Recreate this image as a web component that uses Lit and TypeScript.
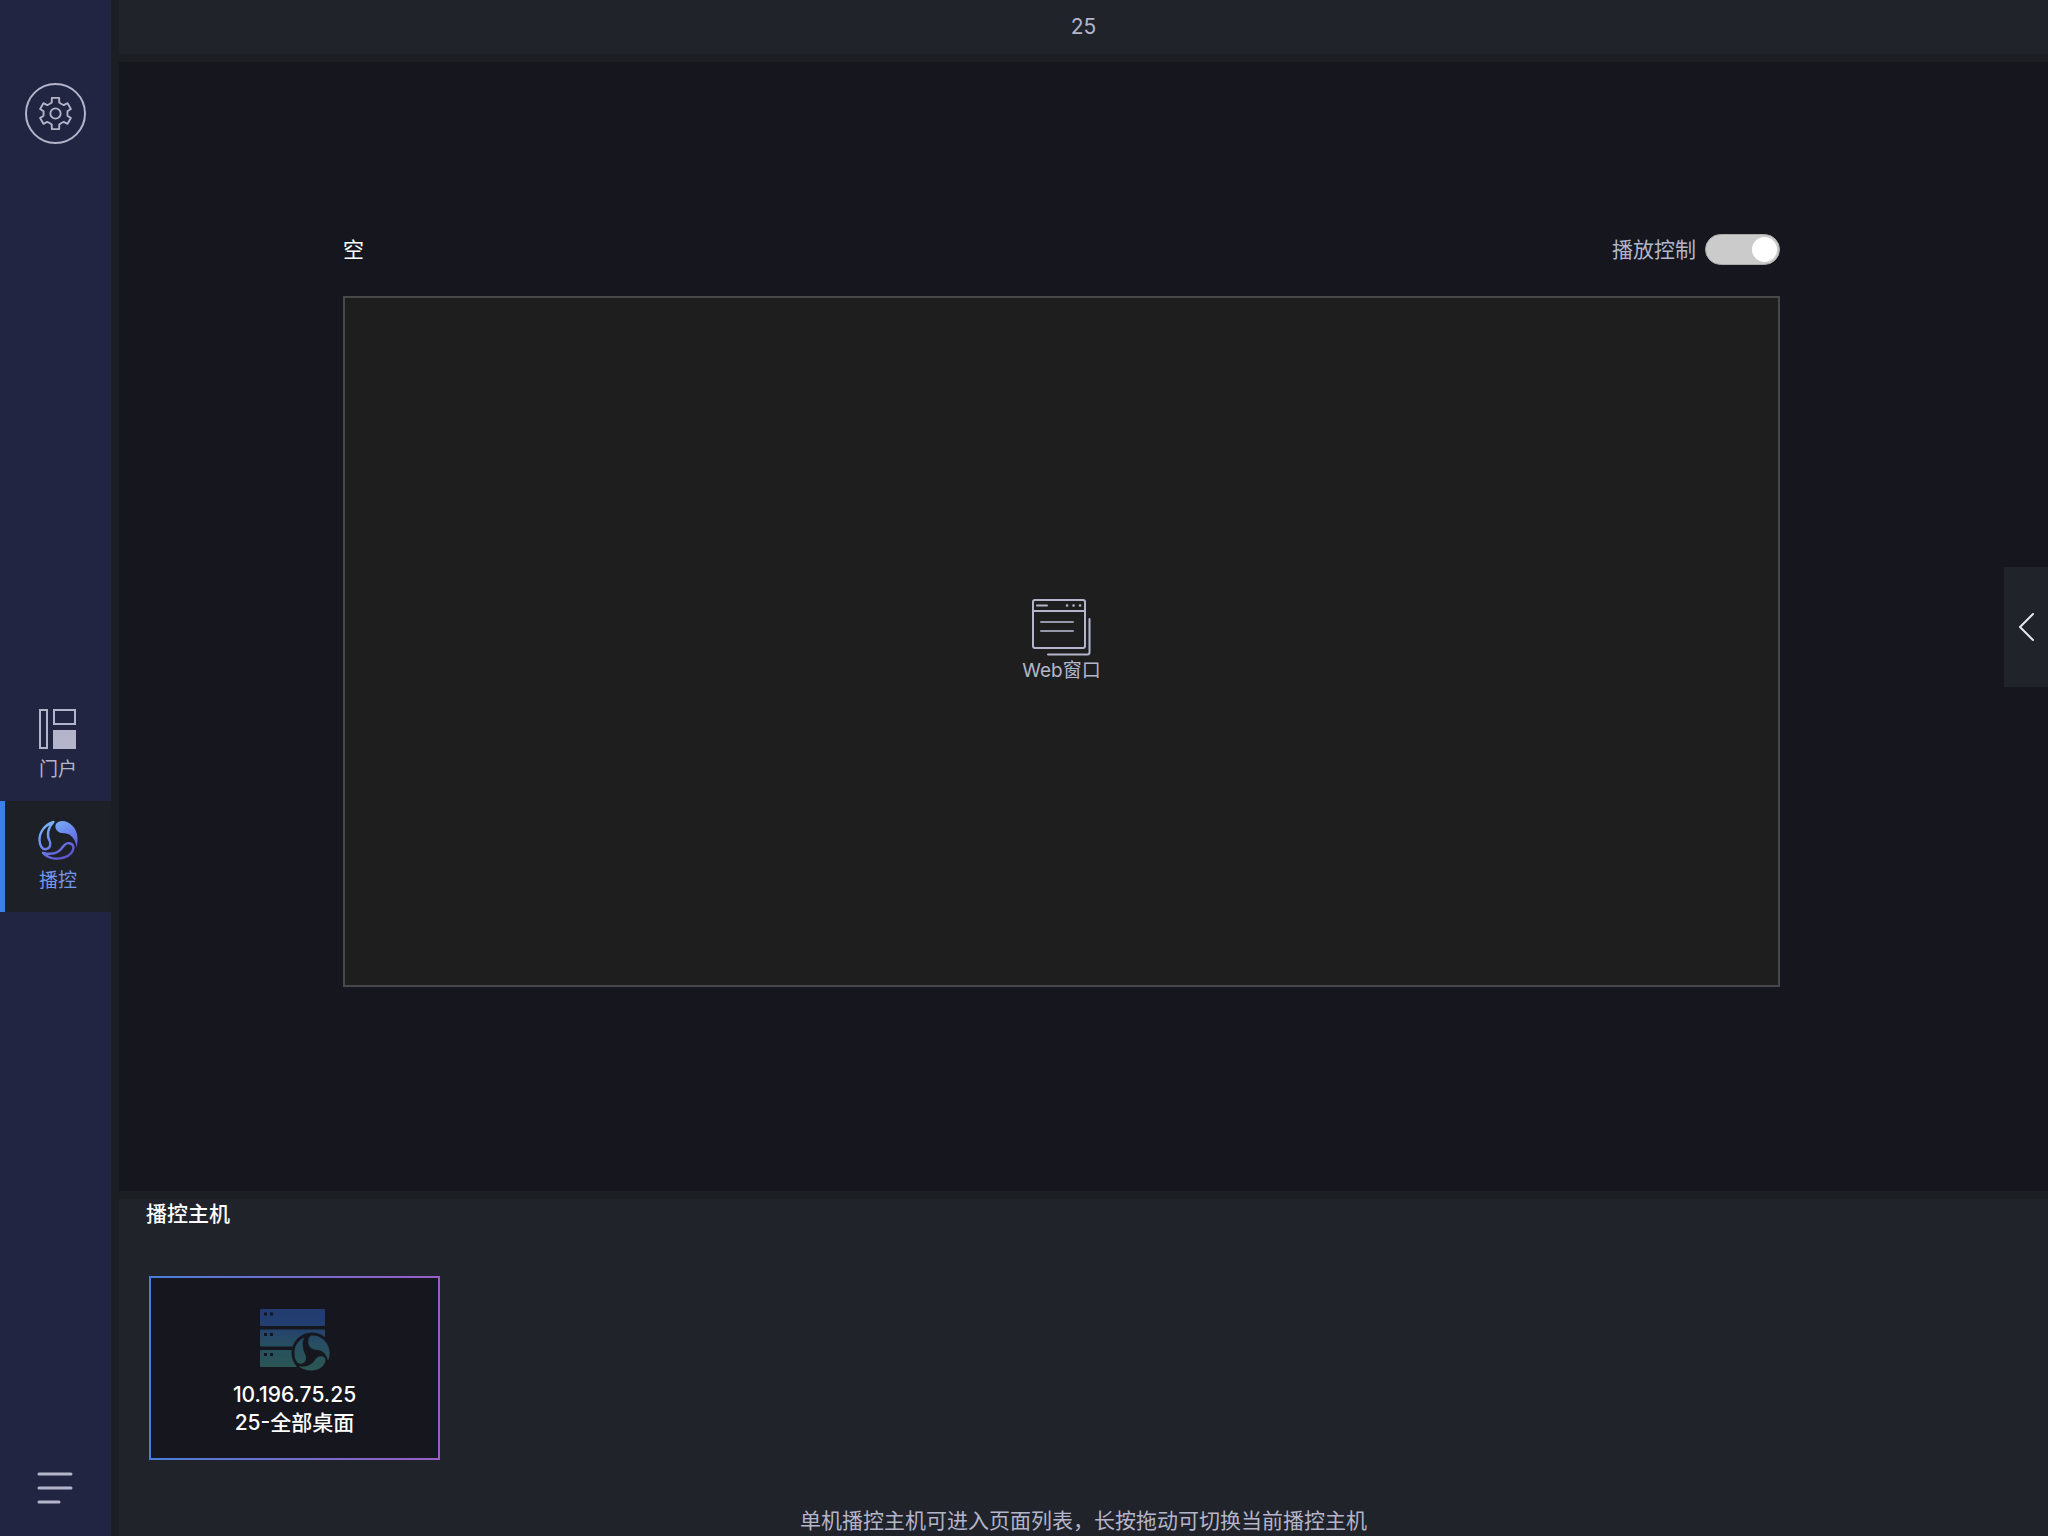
import { LitElement, html, svg, css } from "lit";
import { customElement, property, state } from "lit/decorators.js";

const gearIcon = svg`
  <svg viewBox="0 0 32 32" width="33" height="33" fill="none" stroke="currentColor" stroke-width="1.8" stroke-linejoin="round" aria-hidden="true">
    <path d="M12.4 0.9h7.2v4.5l2.2 1.4 2.2 1 3.7-1.8 3.2 5.6-3.3 2.3v4.2l3.3 2.3-3.2 5.6-3.7-1.8-2.2 1-2.2 1.4v4.5h-7.2v-4.5l-2.2-1.4-2.2-1-3.7 1.8-3.2-5.6 3.3-2.3v-4.2l-3.3-2.3 3.2-5.6 3.7 1.8 2.2-1 2.2-1.4z"/>
    <circle cx="16" cy="16" r="5"/>
  </svg>`;

const portalIcon = svg`
  <svg viewBox="0 0 40 40" width="40" height="40" fill="none" stroke="currentColor" stroke-width="2" aria-hidden="true">
    <rect x="2" y="1" width="7" height="38"/>
    <rect x="16" y="1" width="21" height="14"/>
    <rect x="15" y="21" width="23" height="19" fill="currentColor" stroke="none"/>
  </svg>`;

const playIcon = svg`
  <svg viewBox="0 0 40 40" width="40" height="40" fill="none" aria-hidden="true">
    <defs>
      <linearGradient id="swirl" gradientUnits="userSpaceOnUse" x1="8" y1="2" x2="30" y2="40">
        <stop offset="0" stop-color="#7cb8f6"/>
        <stop offset="0.5" stop-color="#6b80ee"/>
        <stop offset="1" stop-color="#5b4bc4"/>
      </linearGradient>
    </defs>
    <path fill="url(#swirl)" d="M24 1C31 0.8 39.5 8 39.5 18C39.6 22 39.2 25 38.6 27.5C37.5 20 34.5 16 30 14C27 12.8 24.5 14 21 12.2C15.5 9 16 1.2 24 1Z"/>
    <path stroke="url(#swirl)" stroke-width="2.4" stroke-linejoin="round" d="M15.5 2C6.500 5 1.500 12 1.500 20C1.700 25.500 4 29.400 7.500 29.200C12 28.800 13.500 24.500 11.500 20.500C8.800 15.500 9.500 8 15.500 2Z"/>
    <path stroke="url(#swirl)" stroke-width="2.4" stroke-linejoin="round" d="M5 32.800C10 38 18 40 26 37.500C32.500 35.500 36 31 35.300 26.500C34.300 22.500 28.800 22 26 25.500C22.500 30.500 18 36.200 5 32.800Z"/>
  </svg>`;

const menuIcon = svg`
  <svg viewBox="0 0 37 32" width="37" height="32" stroke="currentColor" stroke-width="3" stroke-linecap="round" aria-hidden="true">
    <path d="M2 2h32M2 16h32M2 30h20"/>
  </svg>`;

const windowIcon = svg`
  <svg viewBox="0 0 62 58" width="62" height="58" fill="none" stroke="currentColor" stroke-width="2" stroke-linecap="round" stroke-linejoin="round" aria-hidden="true">
    <rect x="2" y="1" width="52" height="48" rx="2"/>
    <path d="M2 12h52M6 6.500h10"/>
    <path d="M10 23h32M10 32h32" stroke-opacity="0.8"/>
    <path d="M36 6.500h0.100M42.500 6.500h0.100M49 6.500h0.100" stroke-width="2.500"/>
    <path d="M58.500 20v33.500a2 2 0 0 1-2 2H17"/>
  </svg>`;

const chevronIcon = svg`
  <svg viewBox="0 0 16 30" width="16" height="30" fill="none" stroke="currentColor" stroke-width="2" stroke-linecap="round" stroke-linejoin="round" aria-hidden="true">
    <path d="M15 2 2 15l13 13"/>
  </svg>`;

const serverIcon = svg`
  <svg viewBox="0 0 70 62" width="70" height="62" aria-hidden="true">
    <defs>
      <linearGradient id="rack" gradientUnits="userSpaceOnUse" x1="0" y1="0" x2="0" y2="62">
        <stop offset="0" stop-color="#223b70"/>
        <stop offset="0.25" stop-color="#233e70"/>
        <stop offset="0.55" stop-color="#274e62"/>
        <stop offset="1" stop-color="#2a5852"/>
      </linearGradient>
    </defs>
    <g fill="url(#rack)">
      <path d="M1 0h63q1 0 1 1v15q0 1-1 1H1q-1 0-1-1V1q0-1 1-1z"/>
      <path d="M1 20.500h63q1 0 1 1v15q0 1-1 1H1q-1 0-1-1v-15q0-1 1-1z"/>
      <path d="M1 41h63v17H1q-1 0-1-1V42q0-1 1-1z"/>
    </g>
    <g fill="#16171e">
      <path d="M4 3.500h3v3H4zM10 3.500h3v3h-3zM4 24h3v3H4zM10 24h3v3h-3zM4 44h3v3H4zM10 44h3v3h-3z"/>
      <circle cx="52" cy="44" r="20.500"/>
      <path d="M60 41h10v21H60z"/>
    </g>
    <g fill="url(#rack)">
      <path d="M51 26.600C61 25.500 69.500 34 69.600 44C69.600 47 69 49.500 68 51.500C66.500 45 62.500 41.500 58 41C52 41 48.500 38 48.200 33.500C48 30 49 28 51 26.600Z"/>
      <path d="M44.500 28.200C37.500 31.500 34 38 34.500 45C34.800 51 37 54.500 40.500 54.800C45 54.500 47.200 50.500 45.500 46C42.500 40 41.500 33 44.500 28.200Z"/>
      <path d="M38.500 57C44 62 54 63.500 61 58.500C65.500 55 67 50 63.500 47.800C60 46 56.500 48 54.500 51.500C51.500 56 46.500 58.800 38.500 57Z"/>
    </g>
  </svg>`;

const fontStack = css`Inter, "Noto Sans CJK SC", "Liberation Sans", sans-serif`;

@customElement("side-bar")
class SideBar extends LitElement {
  @state() private current = "播控";

  static styles = css`
    :host {
      display: grid;
      grid-template-rows: 1fr auto 1fr;
      background: #222541;
      color: #b4b5ca;
    }
    button, a {
      font: inherit;
      color: inherit;
      text-decoration: none;
    }
    button {
      background: none;
      border: 0;
      padding: 0;
      cursor: pointer;
    }
    .top, .bottom {
      display: flex;
      justify-content: center;
    }
    .top { align-items: flex-start; padding-top: 83px; }
    .bottom { align-items: flex-end; padding-bottom: 32px; }
    .bottom svg { display: block; }
    .settings {
      box-sizing: border-box;
      width: 61px;
      height: 61px;
      border: 2px solid currentColor;
      border-radius: 50%;
      display: grid;
      place-items: center;
    }
    .nav { display: flex; flex-direction: column; padding-top: 66px; }
    .item {
      box-sizing: border-box;
      height: 111px;
      border-left: 5px solid transparent;
      display: flex;
      flex-direction: column;
      align-items: center;
      justify-content: center;
      gap: 9px;
      font-size: 19px;
      line-height: 24px;
    }
    .item.active {
      background: #1d2027;
      border-left-color: #3d80ec;
      color: #7396ee;
    }
    .item svg { display: block; }
  `;

  private pick(event: Event, name: string) {
    event.preventDefault();
    this.current = name;
  }

  render() {
    const items = [
      { name: "门户", icon: portalIcon },
      { name: "播控", icon: playIcon },
    ];
    return html`
      <div class="top"><button class="settings" aria-label="设置">${gearIcon}</button></div>
      <nav class="nav">
        ${items.map((item) => html`
          <a class="item ${item.name === this.current ? "active" : ""}" href="#"
             @click=${(e: Event) => this.pick(e, item.name)}>${item.icon}<span>${item.name}</span></a>`)}
      </nav>
      <div class="bottom"><button aria-label="菜单">${menuIcon}</button></div>
    `;
  }
}

@customElement("toggle-switch")
class ToggleSwitch extends LitElement {
  @property() label = "";

  static styles = css`
    :host { display: block; }
    .label { display: flex; align-items: center; gap: 9px; cursor: pointer; }
    .switch {
      appearance: none;
      box-sizing: border-box;
      margin: 0;
      width: 75px;
      height: 31px;
      padding: 2px;
      border: 1px solid #aaa;
      border-radius: 16px;
      background: #cbcbcb;
      display: flex;
      align-items: center;
      cursor: pointer;
    }
    .switch::before {
      content: "";
      width: 25px;
      height: 25px;
      border-radius: 50%;
      background: #fff;
    }
    .switch:checked { justify-content: flex-end; }
  `;

  render() {
    return html`<label class="label"><span>${this.label}</span><input class="switch" type="checkbox" role="switch" checked></label>`;
  }
}

@customElement("host-card")
class HostCard extends LitElement {
  @property() address = "";
  @property() name = "";

  static styles = css`
    :host { display: block; }
    .card {
      box-sizing: border-box;
      width: 291px;
      height: 184px;
      padding: 10px 0 0;
      border: 2px solid transparent;
      background:
        linear-gradient(#16171e, #16171e) padding-box,
        linear-gradient(90deg, #4a7fd8, #9a5cc8) border-box;
      color: #fff;
      font: inherit;
      font-weight: 500;
      line-height: 28px;
      display: flex;
      flex-direction: column;
      align-items: center;
      justify-content: center;
      cursor: pointer;
    }
    .card svg { display: block; margin-bottom: 10px; }
  `;

  render() {
    return html`<button class="card">${serverIcon}<span>${this.address}</span><span>${this.name}</span></button>`;
  }
}

@customElement("app-root")
class AppRoot extends LitElement {
  static styles = css`
    :host {
      display: grid;
      grid-template-columns: 111px minmax(0, 1fr);
      column-gap: 8px;
      min-height: 100vh;
      background: #1b1e22;
      font-family: ${fontStack};
      font-size: 21px;
      line-height: 30px;
      color: #b4b5ca;
    }
    .page { display: flex; flex-direction: column; gap: 8px; }
    .header {
      box-sizing: border-box;
      height: 54px;
      background: #20232a;
      display: flex;
      align-items: center;
      justify-content: center;
    }
    .title { margin: 0; font-size: 21px; font-weight: 400; }
    .stage {
      flex: 1;
      background: #15161e;
      display: flex;
      align-items: center;
    }
    .scene {
      flex: 1;
      align-self: stretch;
      display: flex;
      flex-direction: column;
      gap: 31px;
      padding: 172px 224px 204px;
    }
    .bar { display: flex; align-items: center; justify-content: space-between; height: 31px; }
    .name { margin: 0; font-size: 21px; font-weight: 400; color: #fff; }
    .screen {
      flex: 1;
      border: 2px solid #48484a;
      background: #1e1e1e;
      display: flex;
      flex-direction: column;
      align-items: center;
      justify-content: center;
      font-size: 19px;
      line-height: 28px;
    }
    .screen svg { display: block; }
    .drawer {
      width: 44px;
      height: 120px;
      padding: 0;
      border: 0;
      background: #20232a;
      color: #e6e6e6;
      display: grid;
      place-items: center;
      cursor: pointer;
    }
    .hosts {
      background: #20232a;
      display: flex;
      flex-direction: column;
    }
    .heading { margin: 0 0 47px 27px; font-size: 21px; font-weight: 500; color: #fff; }
    .list { display: flex; gap: 24px; padding: 0 30px; }
    .hint { margin: 46px 0 0; text-align: center; }
  `;

  render() {
    return html`
      <side-bar></side-bar>
      <div class="page">
        <header class="header"><h1 class="title">25</h1></header>
        <main class="stage">
          <section class="scene">
            <div class="bar">
              <h2 class="name">空</h2>
              <toggle-switch label="播放控制"></toggle-switch>
            </div>
            <div class="screen">${windowIcon}<span>Web窗口</span></div>
          </section>
          <button class="drawer" aria-label="展开">${chevronIcon}</button>
        </main>
        <footer class="hosts">
          <h2 class="heading">播控主机</h2>
          <div class="list"><host-card address="10.196.75.25" name="25-全部桌面"></host-card></div>
          <p class="hint">单机播控主机可进入页面列表，长按拖动可切换当前播控主机</p>
        </footer>
      </div>
    `;
  }
}
